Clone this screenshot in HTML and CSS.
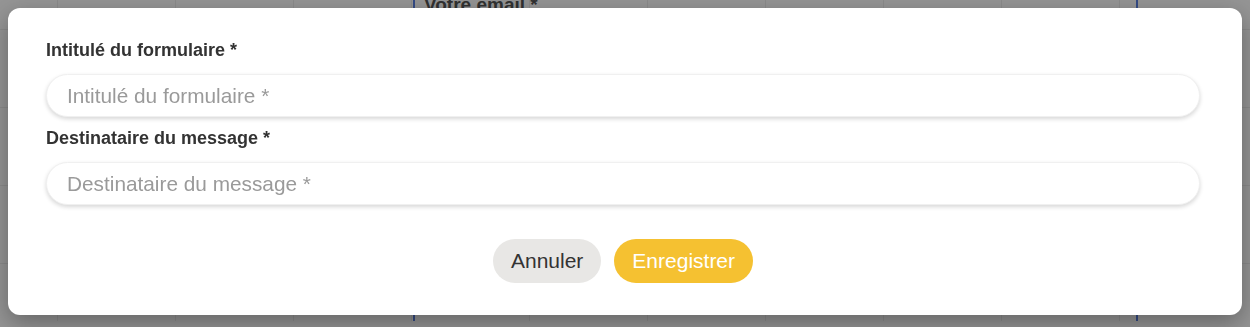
FILE: index.html
```html
<!DOCTYPE html>
<html lang="fr">
  <head>
    <meta charset="UTF-8" />
    <meta name="viewport" content="width=device-width, initial-scale=1.0" />
    <title>Nouveau formulaire</title>
    <link rel="stylesheet" href="styles.css">
  </head>
  <body>
    <div class="page">
      <div class="form-area">
        <p class="field-title">Votre email *</p>
      </div>
    </div>

    <div class="overlay">
      <div class="modal">
        <div class="field">
          <label class="label" for="title">Intitulé du formulaire *</label>
          <input class="input" id="title" type="text" placeholder="Intitulé du formulaire *" />
        </div>
        <div class="field">
          <label class="label" for="to">Destinataire du message *</label>
          <input class="input" id="to" type="text" placeholder="Destinataire du message *" />
        </div>
        <div class="actions">
          <button class="btn btn-cancel">Annuler</button>
          <button class="btn btn-save">Enregistrer</button>
        </div>
      </div>
    </div>
  </body>
</html>
```

FILE: styles.css
```css
body {
  margin: 0;
  padding: 0;
  box-sizing: border-box;
  font-family: "Liberation Sans", Arial, sans-serif;
  overflow: hidden;
}

.page {
  height: 100vh;
  background-color: #fff;
  background-image:
    repeating-linear-gradient(90deg, transparent 0 117px, #eeeeee 117px 118px),
    repeating-linear-gradient(180deg, transparent 0 77px, #eeeeee 77px 78px);
  background-position: -60px 0, 0 -42px;
}

.form-area {
  margin-left: 413px;
  width: 712px;
  height: 100%;
  border-left: 2px solid #5a80e4;
  border-right: 2px solid #5a80e4;
  padding-left: 9px;
}

.field-title {
  margin: 0;
  margin-top: -6px;
  font-size: 19px;
  font-weight: bold;
  color: #555;
}

.overlay {
  position: fixed;
  top: 0;
  left: 0;
  right: 0;
  bottom: 0;
  background-color: rgba(0, 0, 0, 0.42);
  padding: 8px;
}

.modal {
  background-color: #fff;
  border-radius: 12px;
  padding: 32px 42px 32px 38px;
  box-shadow: 0 8px 24px rgba(0, 0, 0, 0.32);
}

.field {
  margin-bottom: 11px;
}

.label {
  display: block;
  font-size: 18px;
  line-height: 21px;
  font-weight: bold;
  color: #333;
  margin-bottom: 13px;
}

.input {
  display: block;
  box-sizing: border-box;
  width: 100%;
  height: 43px;
  padding: 0 20px;
  border: 1px solid #f0f0f0;
  border-radius: 22px;
  box-shadow: 0 2px 4px rgba(0, 0, 0, 0.16);
  font-family: inherit;
  font-size: 20.8px;
  color: #333;
  outline: none;
}

.input::placeholder {
  color: #9a9a9a;
}

.actions {
  display: flex;
  justify-content: center;
  gap: 13px;
  margin-top: 34px;
}

.btn {
  height: 44px;
  padding: 0 18px;
  border: none;
  border-radius: 22px;
  font-family: inherit;
  font-size: 21px;
  cursor: pointer;
}

.btn-cancel {
  background-color: #e8e7e5;
  color: #333;
}

.btn-save {
  background-color: #f5c131;
  color: #fff;
}
```
